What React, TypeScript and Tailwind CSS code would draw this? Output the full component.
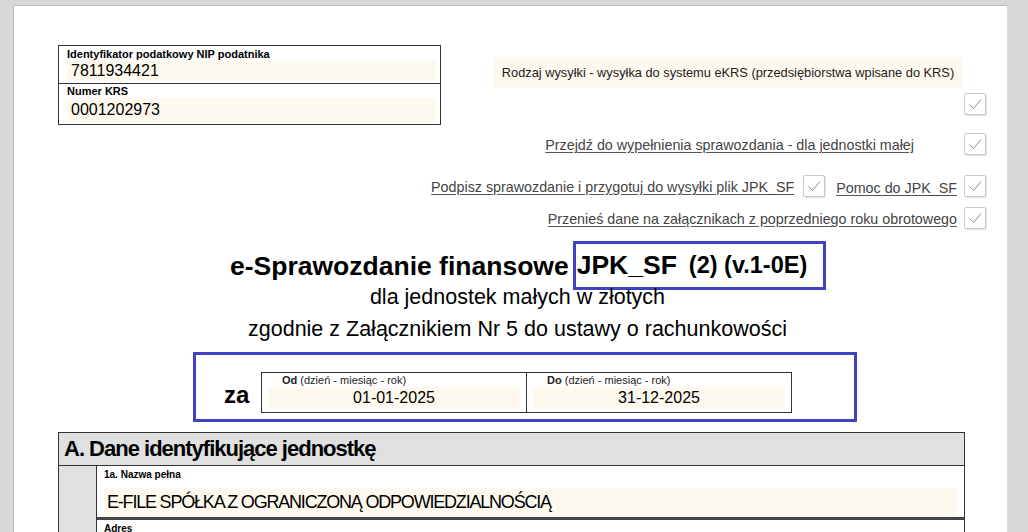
import React from 'react';

function Check() {
  return (
    <span className="inline-flex h-[22px] w-[22px] shrink-0 items-center justify-center rounded-[2px] border border-[#c9c9c9] bg-white shadow-[1px_1px_1px_rgba(0,0,0,0.12)]">
      <svg width="16" height="16" viewBox="0 0 16 16" fill="none">
        <path d="M2.5 8.5 L6.5 12.5 L14 3.5" stroke="#8a8a8a" strokeWidth="1" />
      </svg>
    </span>
  );
}

function LinkRow({ text }: { text: string }) {
  return <span className="text-[14.3px] text-[#444] underline underline-offset-2 decoration-[#555]">{text}</span>;
}

export default function App() {
  return (
    <div className="h-[532px] w-[1028px] overflow-hidden bg-[#d8d8d8] pl-[13px] pt-[5px] font-['Liberation_Sans',Arial,sans-serif] text-black">
      <div className="h-[540px] w-[994px] border-l border-t border-[#bdbdbd] bg-white">
        {/* header: NIP + options */}
        <div className="flex items-start">
          <div className="ml-[44px] mt-[39px] w-[383px] border border-[#333]">
            <div className="border-b border-[#333] pb-[2px]">
              <div className="pl-[8px] pt-[2px] text-[11px] font-bold leading-[13px]">Identyfikator podatkowy NIP podatnika</div>
              <div className="ml-[8px] mr-[4px] bg-[#fdf9ee] pl-[4px] text-[16px] leading-[20px]">7811934421</div>
            </div>
            <div className="pb-[2px]">
              <div className="pl-[8px] pt-[1px] text-[11px] font-bold leading-[13px]">Numer KRS</div>
              <div className="ml-[8px] mr-[4px] bg-[#fdf9ee] pl-[4px] text-[16px] leading-[24px]">0001202973</div>
            </div>
          </div>
          <div className="flex flex-1 flex-col items-end pr-[21px] pt-[51px]">
            <div className="mr-[23px] flex h-[31px] w-[470px] items-center justify-center bg-[#fdf9ee] text-[12.8px] text-[#222]">
              Rodzaj wysyłki - wysyłka do systemu eKRS (przedsiębiorstwa wpisane do KRS)
            </div>
            <div className="mt-[5px]">
              <Check />
            </div>
            <div className="mt-[14px] flex items-center">
              <LinkRow text="Przejdź do wypełnienia sprawozdania - dla jednostki małej" />
              <span className="ml-[50px]">
                <Check />
              </span>
            </div>
          </div>
        </div>
        <div className="mt-[16px] flex items-center justify-end pr-[21px]">
          <LinkRow text="Podpisz sprawozdanie i przygotuj do wysyłki plik JPK_SF" />
          <span className="ml-[9px]">
            <Check />
          </span>
          <span className="ml-[11px]">
            <LinkRow text="Pomoc do JPK_SF" />
          </span>
          <span className="ml-[7px]">
            <Check />
          </span>
        </div>
        <div className="mt-[6px] flex items-center justify-end pr-[21px]">
          <LinkRow text="Przenieś dane na załącznikach z poprzedniego roku obrotowego" />
          <span className="ml-[7px]">
            <Check />
          </span>
        </div>

        {/* title */}
        <div className="mt-[8px] flex items-center pl-[216px]">
          <span className="text-[26.5px] font-bold leading-[30px]">e-Sprawozdanie finansowe</span>
          <span className="ml-[4px] flex h-[49px] w-[253px] items-center border-[3px] border-[#4042c2] pl-[1px] text-[26.5px] font-bold">
            JPK_SF
            <span className="ml-[12px] text-[23.5px]">(2) (v.1-0E)</span>
          </span>
        </div>
        <div className="mt-[-6px] pl-[14px] text-center text-[21.5px] leading-[26px]">dla jednostek małych w złotych</div>
        <div className="mt-[6px] pl-[14px] text-center text-[21.5px] leading-[26px]">zgodnie z Załącznikiem Nr 5 do ustawy o rachunkowości</div>

        {/* period */}
        <div className="ml-[179px] mt-[10px] h-[70px] w-[664px] border-[3px] border-[#4042c2] pt-[16px]">
          <div className="flex items-center">
            <span className="ml-[28px] mt-[6px] w-[40px] text-[24px] font-bold">za</span>
            <div className="ml-[-3px] flex h-[41px] w-[531px] border border-[#333]">
              {[
                ['Od', '01-01-2025'],
                ['Do', '31-12-2025'],
              ].map(([lbl, val], i) => (
                <div key={lbl} className={`flex-1 ${i === 0 ? 'border-r border-[#333]' : ''}`}>
                  <div className="pl-[20px] pt-[1px] text-[11px] leading-[12px] text-[#222]">
                    <b>{lbl}</b> (dzień - miesiąc - rok)
                  </div>
                  <div className="mx-[6px] mt-[1px] bg-[#fdf9ee] text-center text-[16px] leading-[22px]">{val}</div>
                </div>
              ))}
            </div>
          </div>
        </div>

        {/* section A */}
        <div className="ml-[44px] mt-[10px] w-[907px] border border-[#333] bg-[#e0e0e0]">
          <div className="h-[33px] border-b border-[#333] pl-[5px] pt-[1px] text-[22px] font-bold leading-[30px] tracking-[-1px]">
            A. Dane identyfikujące jednostkę
          </div>
          <div className="ml-[37px] border-l border-[#333] bg-white">
            <div className="pl-[7px] pt-[2px] text-[10px] font-bold leading-[13px]">1a. Nazwa pełna</div>
            <div className="mx-[7px] mt-[7px] flex h-[28px] items-center bg-[#fdf9ee] pl-[3px] text-[18px] tracking-[-1.2px]">
              E-FILE SPÓŁKA Z OGRANICZONĄ ODPOWIEDZIALNOŚCIĄ
            </div>
            <div className="mt-[1px] border-t-[3px] border-[#444] pl-[7px] pt-[2px] text-[10px] font-bold leading-[13px]">Adres</div>
          </div>
        </div>
      </div>
    </div>
  );
}
